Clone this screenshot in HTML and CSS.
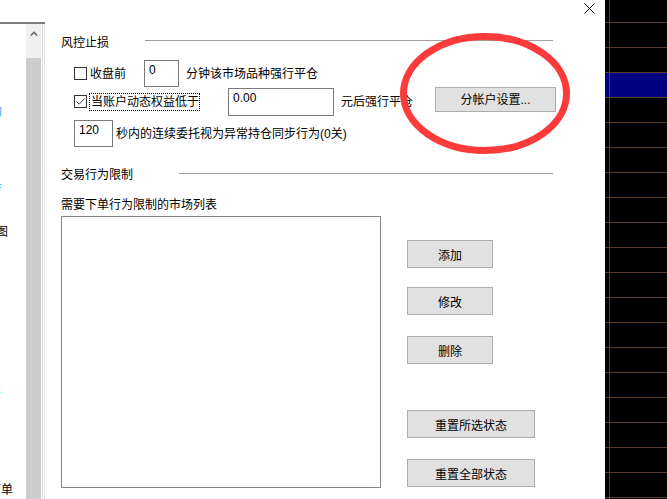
FILE: index.html
```html
<!DOCTYPE html>
<html lang="zh-CN">
<head>
    <meta charset="UTF-8">
    <title>风控设置</title>
    <link rel="stylesheet" href="styles.css">
</head>
<body>
<div class="screen">
    <aside class="sidebar">
        <div class="sidebar-top"></div>
        <div class="sidebar-panel">
            <div class="side-list">
                <div class="side-item side-item-1 tint-blue">的</div>
                <div class="side-item side-item-2 tint-cyan">行</div>
                <div class="side-item side-item-3">图</div>
                <div class="side-item side-item-4 tint-cyan">行</div>
                <div class="side-item side-item-5">下单</div>
            </div>
            <div class="scrollbar">
                <div class="scroll-up">
                    <svg width="8" height="5" viewBox="0 0 8 5"><path d="M0.8 4.4 L4 1.2 L7.2 4.4" fill="none" stroke="#606060" stroke-width="1.4"/></svg>
                </div>
                <div class="scroll-thumb"></div>
            </div>
            <div class="side-edge"></div>
        </div>
    </aside>

    <main class="dialog">
        <button class="close-btn" title="关闭">
            <svg width="11" height="11" viewBox="0 0 11 11"><path d="M0.5 0.5 L10.5 10.5 M10.5 0.5 L0.5 10.5" stroke="#000" stroke-width="1"/></svg>
        </button>

        <div class="group-head">
            <span class="group-title">风控止损</span>
            <span class="group-line"></span>
        </div>

        <div class="stop-row row-close">
            <span class="checkbox"></span>
            <span class="check-label">收盘前</span>
            <div class="field field-minutes">0</div>
            <span class="row-text">分钟该市场品种强行平仓</span>
        </div>

        <div class="stop-row row-equity">
            <span class="checkbox">
                <svg width="11" height="11" viewBox="0 0 11 11"><path d="M1.5 5.5 L4.2 8.2 L9.5 2.5" fill="none" stroke="#3a4656" stroke-width="1"/></svg>
            </span>
            <span class="check-label focus-label">当账户动态权益低于</span>
            <div class="field field-equity">0.00</div>
            <span class="row-text">元后强行平仓</span>
            <button class="btn btn-account">分帐户设置...</button>
        </div>

        <div class="stop-row row-seconds">
            <div class="field field-seconds">120</div>
            <span class="row-text row-text-tight">秒内的连续委托视为异常持仓同步行为(0关)</span>
        </div>

        <div class="group-head group-head-trade">
            <span class="group-title">交易行为限制</span>
            <span class="group-line"></span>
        </div>

        <div class="list-label">需要下单行为限制的市场列表</div>

        <div class="market-area">
            <div class="market-list"></div>
            <div class="market-actions">
                <button class="btn btn-small btn-add">添加</button>
                <button class="btn btn-small btn-edit">修改</button>
                <button class="btn btn-small btn-del">删除</button>
                <button class="btn btn-wide btn-reset-sel">重置所选状态</button>
                <button class="btn btn-wide btn-reset-all">重置全部状态</button>
            </div>
        </div>

        <svg class="mark" width="170" height="121" viewBox="0 0 170 121">
            <ellipse cx="85" cy="60.5" rx="81.5" ry="57" fill="none" stroke="#fd3b3b" stroke-width="7"/>
        </svg>
    </main>

    <div class="chart">
        <div class="chart-row"></div>
        <div class="chart-row"></div>
        <div class="chart-row"></div>
        <div class="chart-row selected"></div>
        <div class="chart-row"></div>
        <div class="chart-row"></div>
        <div class="chart-row"></div>
        <div class="chart-row"></div>
        <div class="chart-row"></div>
        <div class="chart-row"></div>
        <div class="chart-row"></div>
        <div class="chart-row"></div>
        <div class="chart-row"></div>
        <div class="chart-row"></div>
        <div class="chart-row"></div>
        <div class="chart-row"></div>
        <div class="chart-row"></div>
        <div class="chart-row"></div>
        <div class="chart-row"></div>
        <div class="chart-row"></div>
        <div class="chart-row"></div>
    </div>
</div>
</body>
</html>
```

FILE: styles.css
```css
body {
    margin: 0;
    font-family: "Liberation Sans", "Noto Sans CJK SC", sans-serif;
    font-size: 12px;
    color: #000;
    background: #fff;
}

.screen {
    display: flex;
    width: 667px;
    height: 499px;
    overflow: hidden;
}

/* left list panel, mostly hidden behind the dialog */
.sidebar {
    width: 45px;
    flex: none;
    display: flex;
    flex-direction: column;
}

.sidebar-top {
    height: 22px;
    flex: none;
}

.sidebar-panel {
    flex: 1;
    display: flex;
    min-height: 0;
    border-top: 2px solid #7d7d7d;
}

.side-list {
    width: 26px;
    flex: none;
    display: flex;
    flex-direction: column;
    overflow: hidden;
}

.side-item {
    display: flex;
    justify-content: flex-end;
    flex: none;
    overflow: hidden;
    white-space: nowrap;
    line-height: 16px;
    height: 16px;
}

.side-item-1 { margin-top: 80px; width: 2px; }
.side-item-2 { margin-top: 62px; width: 2px; }
.side-item-3 { margin-top: 26px; width: 8px; }
.side-item-4 { margin-top: 147px; width: 1px; }
.side-item-5 { margin-top: 79px; width: 13px; }

.tint-blue { color: #3399ff; }
.tint-cyan { color: #33ccff; }

.scrollbar {
    width: 15px;
    flex: none;
    display: flex;
    flex-direction: column;
}

.scroll-up {
    height: 34px;
    flex: none;
    box-sizing: border-box;
    padding-top: 7px;
    display: flex;
    justify-content: center;
    align-items: flex-start;
    background: #f0f0f0;
}

.scroll-thumb {
    flex: 1;
    background: #cdcdcd;
}

.side-edge {
    width: 4px;
    flex: none;
    background: linear-gradient(to right, #fff 0 1px, #dcdcdc 1px 2px, #fff 2px 3px, #e6e6e6 3px 4px);
}

/* dialog */
.dialog {
    position: relative;
    width: 560px;
    flex: none;
    box-sizing: border-box;
    padding: 35px 0 0 16px;
    background: #fff;
}

.close-btn {
    position: absolute;
    top: 3px;
    right: 10px;
    width: 11px;
    height: 11px;
    padding: 0;
    border: none;
    background: none;
    display: flex;
}

.group-head {
    display: flex;
    width: 492px;
    line-height: 16px;
}

.group-line {
    flex: 1;
    height: 1px;
    margin-top: 5px;
    margin-left: 36px;
    background: #a0a0a0;
}

.group-head-trade {
    margin-top: 20px;
}

.group-head-trade .group-line {
    margin-left: 46px;
    margin-top: 6px;
}

.stop-row {
    display: flex;
    align-items: center;
    padding-left: 13px;
    line-height: 16px;
}

.row-close {
    margin-top: 9px;
    height: 27px;
}

.row-equity {
    height: 29px;
}

.row-seconds {
    margin-top: 4px;
    height: 27px;
}

.checkbox {
    width: 13px;
    height: 13px;
    flex: none;
    box-sizing: border-box;
    border: 1px solid #333;
    background: #fff;
    display: flex;
    align-items: center;
    justify-content: center;
}

.check-label {
    margin-left: 3px;
    white-space: nowrap;
}

.focus-label {
    margin-left: 2px;
    padding-left: 1px;
    border: 1px dotted #000;
}

.field {
    flex: none;
    box-sizing: border-box;
    padding: 1px 4px;
    border: 1px solid #7a7a7a;
    background: #fff;
    align-self: stretch;
}

.field-minutes {
    width: 35px;
    margin-left: 18px;
}

.field-equity {
    width: 106px;
    height: 28px;
    margin-left: 28px;
    align-self: flex-start;
    margin-top: 1px;
}

.field-seconds {
    width: 39px;
}

.row-text {
    margin-left: 7px;
    white-space: nowrap;
}

.row-text-tight {
    margin-left: 3px;
}

.btn {
    box-sizing: border-box;
    height: 28px;
    padding: 0;
    border: 1px solid #adadad;
    background: #e1e1e1;
    color: #000;
    font: inherit;
}

.btn-account {
    width: 121px;
    height: 25px;
    margin-left: 22px;
    align-self: flex-start;
}

.list-label {
    margin-top: 14px;
    line-height: 16px;
}

.market-area {
    display: flex;
    margin-top: 3px;
}

.market-list {
    width: 320px;
    height: 272px;
    box-sizing: border-box;
    border: 1px solid #828790;
    background: #fff;
}

.market-actions {
    display: flex;
    flex-direction: column;
    align-items: flex-start;
    margin-left: 26px;
}

.btn-small { width: 86px; }
.btn-wide { width: 128px; }

.btn-add { margin-top: 24px; }
.btn-edit { margin-top: 19px; }
.btn-del { margin-top: 21px; }
.btn-reset-sel { margin-top: 46px; }
.btn-reset-all { margin-top: 21px; }

/* red hand-drawn circle over the account button */
.mark {
    position: absolute;
    left: 355px;
    top: 33px;
    pointer-events: none;
}

/* chart strip on the right */
.chart {
    flex: 1;
    background: #000;
    overflow: hidden;
}

.chart-row {
    height: 24px;
    border-bottom: 1px solid #5c3b26;
    background-color: #000;
    background-image: linear-gradient(to right, transparent 4px, #5c3b26 4px, #5c3b26 5px, transparent 5px);
}

.chart-row:first-child {
    height: 22px;
}

.chart-row.selected {
    background-color: #000080;
}
```
